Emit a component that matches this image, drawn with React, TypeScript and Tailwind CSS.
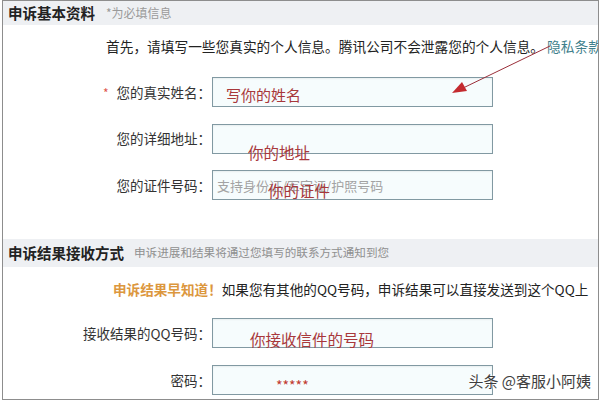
import React from "react";

const font = { fontFamily: '"Noto Sans CJK SC", "Noto Sans", sans-serif' };

function Field({ label, star, children }: { label: string; star?: boolean; children?: React.ReactNode }) {
    return (
        <div className="flex items-center">
            <div className="w-[208px] shrink-0 text-right text-[13.5px] text-[#333]">
                {star && <span className="mr-[8px] text-[12px] text-[#e0574d]">*</span>}
                {label}
            </div>
            <div className="relative ml-[1px] h-[30px] w-[281px] border border-[#8199a2] bg-[#f6fcfd] shadow-[inset_0_1px_2px_rgba(0,0,0,0.06)]">
                {children}
            </div>
        </div>
    );
}

// handwritten-style red notes drawn over the inputs
function Note({ children, className = "" }: { children: React.ReactNode; className?: string }) {
    return <span className={`absolute whitespace-nowrap leading-[20px] text-[#a8383b] ${className}`}>{children}</span>;
}

export default function App() {
    return (
        <div className="h-[402px] w-[602px] bg-white" style={font}>
            <div className="relative ml-[2px] flex h-[400px] w-[597px] flex-col overflow-hidden border border-[#8d8d8d]">
                {/* section 1 header */}
                <div className="flex h-[24px] shrink-0 items-center bg-[#eef0f3] pl-[5px]">
                    <span className="text-[14.5px] font-bold text-[#222]">申诉基本资料</span>
                    <span className="ml-[11px] text-[12px] text-[#9a9a9a]">*为必填信息</span>
                </div>

                <div className="flex flex-col gap-[21px] pt-[11px]">
                    <p className="h-[20px] whitespace-nowrap pl-[103px] text-[13.7px] leading-[20px] text-[#222]">
                        首先，请填写一些您真实的个人信息。腾讯公司不会泄露您的个人信息。 <span className="text-[#3f7f8c]">隐私条款</span>
                    </p>
                    <div className="flex flex-col gap-[16.5px]">
                        <Field label="您的真实姓名：" star>
                            <Note className="left-[13px] top-[7px] text-[15px]">写你的姓名</Note>
                        </Field>
                        <Field label="您的详细地址：">
                            <Note className="left-[35px] top-[17px] text-[15.5px]">你的地址</Note>
                        </Field>
                        <Field label="您的证件号码：">
                            <span className="absolute left-[4px] top-[5px] whitespace-nowrap text-[13px] leading-[20px] text-[#a3a3a3]">支持身份证/军官证/护照号码</span>
                            <Note className="left-[55px] top-[9px] text-[15.5px]">你的证件</Note>
                        </Field>
                    </div>
                </div>

                {/* section 2 header */}
                <div className="mt-[39px] flex h-[28px] shrink-0 items-center bg-[#eef0f3] pl-[5px]">
                    <span className="text-[14.5px] font-bold text-[#222]">申诉结果接收方式</span>
                    <span className="ml-[10px] text-[11.6px] text-[#8f8f8f]">申诉进展和结果将通过您填写的联系方式通知到您</span>
                </div>

                <div className="flex flex-col gap-[19px] pt-[12px]">
                    <p className="h-[20px] whitespace-nowrap pl-[110px] text-[13.6px] leading-[20px] text-[#222]">
                        <span className="font-bold text-[#dc973e]">申诉结果早知道！</span>
                        如果您有其他的QQ号码，申诉结果可以直接发送到这个QQ上
                    </p>
                    <div className="flex flex-col gap-[17px]">
                        <Field label="接收结果的QQ号码：">
                            <Note className="left-[37px] top-[10px] text-[15.5px]">你接收信件的号码</Note>
                        </Field>
                        <Field label="密码：">
                            <Note className="left-[63px] top-[9px] text-[14px] text-[#c0392f]">*****</Note>
                        </Field>
                    </div>
                </div>

                {/* red arrow annotation */}
                <svg className="absolute left-0 top-0" width="597" height="400" viewBox="0 0 597 400">
                    <line x1="547" y1="45" x2="458" y2="88" stroke="#9b2f3a" strokeWidth="1" />
                    <polygon points="449,92 459,81 464,90" fill="#c42a2f" />
                </svg>

                {/* watermark */}
                <div
                    className="absolute bottom-[7px] right-[7px] whitespace-nowrap text-[15px] leading-[22px] text-[#3e3e3e]"
                    style={{ textShadow: "0 0 2px #fff, 0 0 2px #fff" }}
                >
                    头条 @客服小阿姨
                </div>
            </div>
        </div>
    );
}
